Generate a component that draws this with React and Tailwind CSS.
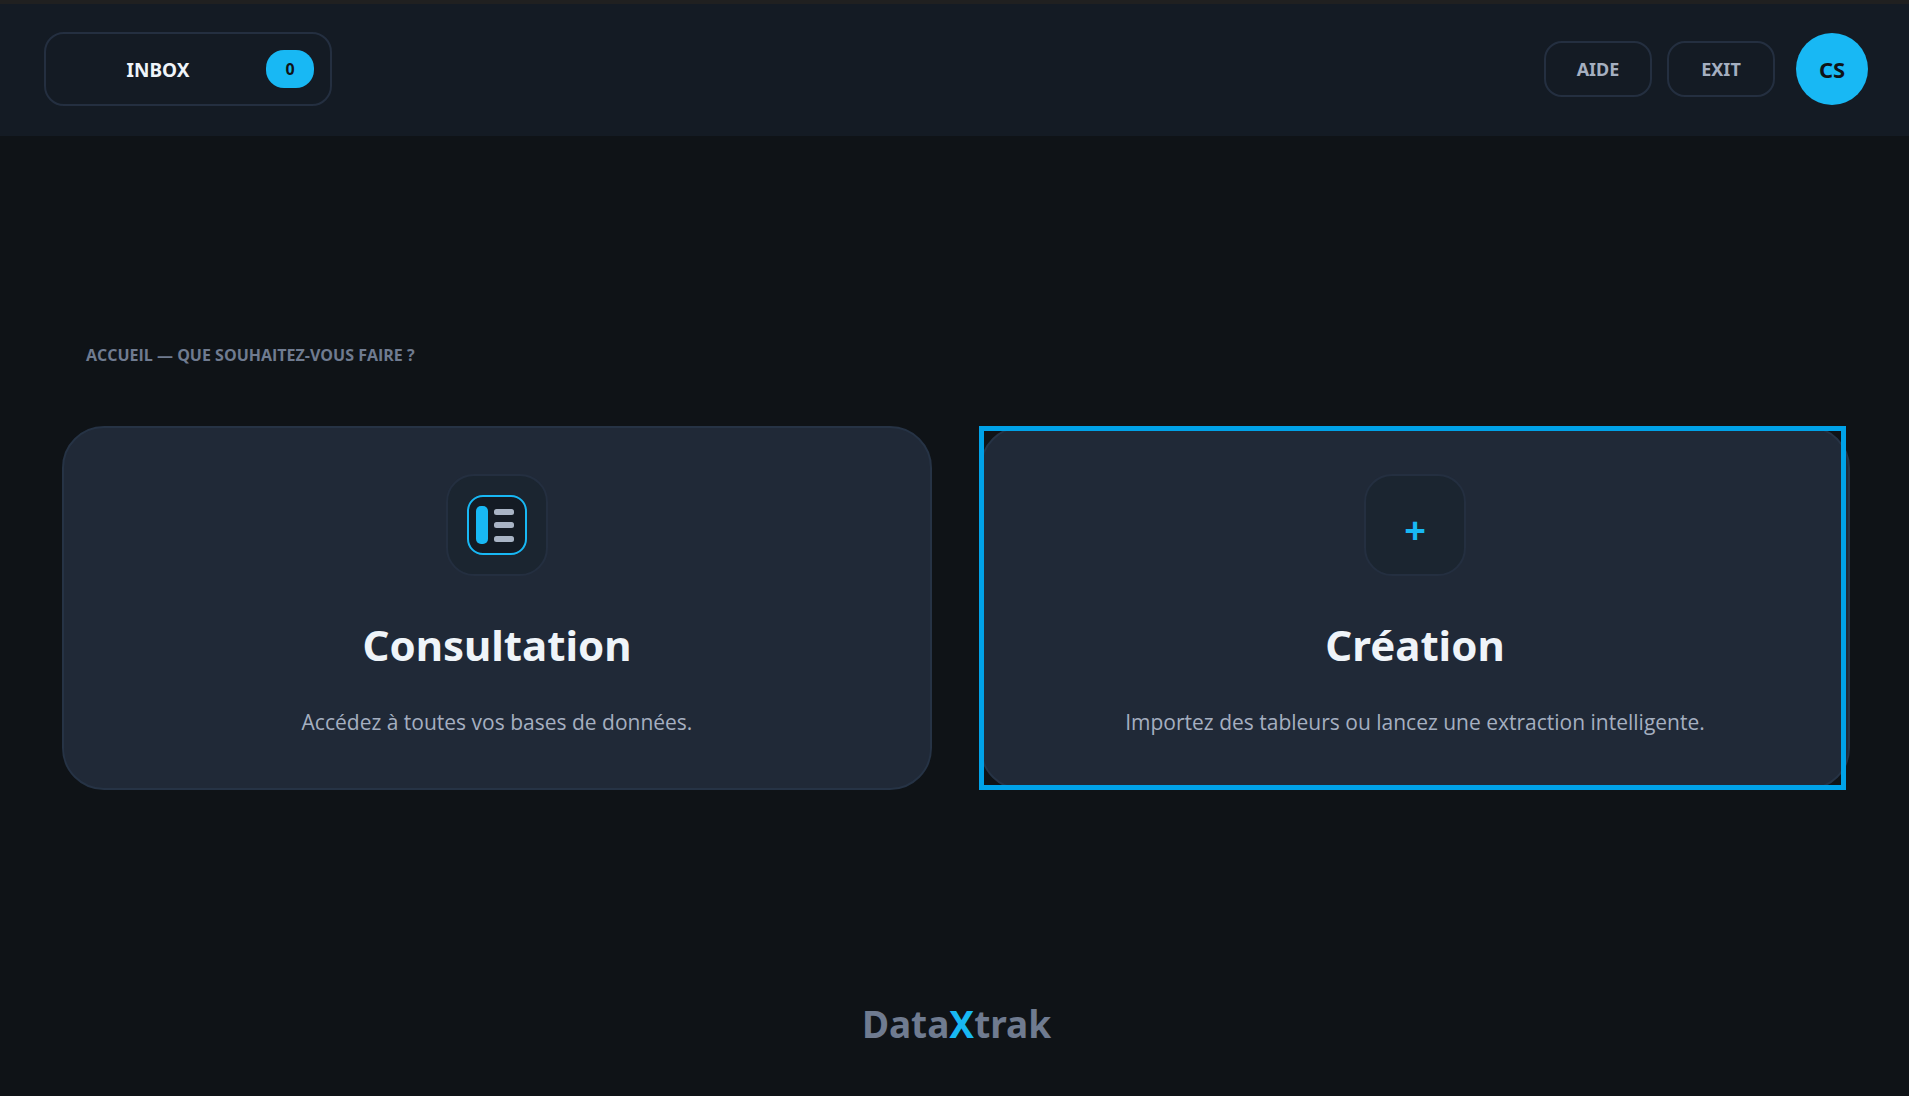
function DatabaseIcon() {
  return (
    <svg width="60" height="60" viewBox="0 0 60 60" aria-hidden="true">
      <rect x="1" y="1" width="58" height="58" rx="15" fill="#141b24" stroke="#18b8f4" strokeWidth="2" />
      <rect x="9" y="11" width="12" height="38" rx="5" fill="#18b8f4" />
      <rect x="27" y="14" width="20" height="6" rx="2.5" fill="#a9b4c5" />
      <rect x="27" y="27" width="20" height="6" rx="2.5" fill="#a9b4c5" />
      <rect x="27" y="41" width="20" height="6" rx="2.5" fill="#a9b4c5" />
    </svg>
  );
}

function HeaderButton({ children }) {
  return (
    <button
      type="button"
      className="flex h-14 w-[108px] items-center justify-center rounded-[18px] border-2 border-[#242f40] text-lg font-bold text-[#a5afc0]"
    >
      {children}
    </button>
  );
}

function HomeCard({ icon, title, description, selected }) {
  return (
    <button
      type="button"
      className="relative flex flex-1 flex-col items-center rounded-[42px] border-2 border-[#263345] bg-[#202937] px-6 pt-[46px] pb-12"
    >
      <span className="flex size-[102px] items-center justify-center rounded-[28px] border-2 border-[#242f40] bg-[#1b2530]">
        {icon}
      </span>
      <span className="mt-9 text-[42px] leading-[66px] font-bold text-[#eff4f9]">{title}</span>
      <span className="mt-[26px] font-['Open_Sans','Segoe_UI',sans-serif] text-[21px] leading-[36px] text-[#a5afc0]">{description}</span>
      {selected && (
        <span className="pointer-events-none absolute -top-0.5 right-0.5 -bottom-0.5 -left-[3px] border-[5px] border-[#00a2e8]" />
      )}
    </button>
  );
}

export default function App() {
  return (
    <div className="flex min-h-screen flex-col border-t-4 border-[#202020] bg-[#0f1317] font-['Noto_Sans','Segoe_UI',sans-serif]">
      <header className="flex items-center justify-between bg-[#141b24] pt-7 pr-[41px] pb-[30px] pl-11">
        <button
          type="button"
          className="flex h-[74px] w-72 items-center rounded-[20px] border-2 border-[#242f40] pr-4 pl-1"
        >
          <span className="flex-1 pt-0.5 text-center text-[19px] font-bold text-[#eff4f9]">INBOX</span>
          <span className="flex h-[38px] w-12 items-center justify-center rounded-[18px] bg-[#18b8f4] text-base font-bold text-[#0f1317]">
            0
          </span>
        </button>
        <div className="flex items-center">
          <nav className="mr-[21px] flex gap-[15px]">
            <HeaderButton>AIDE</HeaderButton>
            <HeaderButton>EXIT</HeaderButton>
          </nav>
          <button
            type="button"
            className="flex size-[72px] items-center justify-center rounded-full bg-[#18b8f4] text-[22px] font-bold text-[#0f1317]"
          >
            CS
          </button>
        </div>
      </header>

      <main className="flex flex-1 flex-col justify-center pr-[59px] pb-1 pl-[62px]">
        <h1 className="pl-6 font-['Open_Sans','Segoe_UI',sans-serif] text-base leading-6 font-bold text-[#6f7b90]">
          ACCUEIL — QUE SOUHAITEZ-VOUS FAIRE ?
        </h1>
        <div className="mt-[59px] flex gap-12">
          <HomeCard
            icon={<DatabaseIcon />}
            title="Consultation"
            description="Accédez à toutes vos bases de données."
          />
          <HomeCard
            selected
            icon={<span className="pt-2 text-[38px] leading-10 font-bold text-[#18b8f4]">+</span>}
            title="Création"
            description="Importez des tableurs ou lancez une extraction intelligente."
          />
        </div>
      </main>

      <footer className="pb-12 pl-1 text-center text-[37px] leading-[48px] font-bold text-[#6f7b90]">
        Data<span className="text-[#18b8f4]">X</span>trak
      </footer>
    </div>
  );
}
